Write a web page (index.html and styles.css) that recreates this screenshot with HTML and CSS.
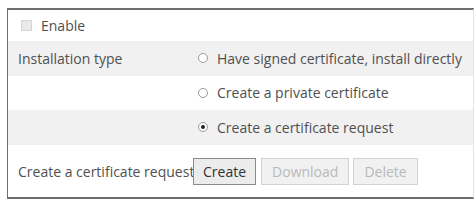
FILE: index.html
```html
<!DOCTYPE html>
<html lang="en">
<head>
    <meta charset="UTF-8">
    <title>Certificate</title>
    <link rel="stylesheet" href="styles.css">
</head>
<body>
    <div class="panel">
        <div class="row row-enable">
            <span class="check"></span>
            <span>Enable</span>
        </div>
        <div class="row shaded">
            <span class="label">Installation type</span>
            <span class="radio"></span>
            <span>Have signed certificate, install directly</span>
        </div>
        <div class="row">
            <span class="label"></span>
            <span class="radio"></span>
            <span>Create a private certificate</span>
        </div>
        <div class="row shaded">
            <span class="label"></span>
            <span class="radio checked"></span>
            <span>Create a certificate request</span>
        </div>
        <div class="row row-actions">
            <span class="label">Create a certificate request</span>
            <button class="btn btn-create">Create</button>
            <button class="btn" disabled>Download</button>
            <button class="btn" disabled>Delete</button>
        </div>
    </div>
</body>
</html>
```

FILE: styles.css
```css
* {
    margin: 0;
    padding: 0;
    box-sizing: border-box;
}

body {
    font-family: 'Open Sans', 'Noto Sans', sans-serif;
    font-size: 14px;
    color: #505050;
    background: #fff;
}

.panel {
    margin: 8px 0 0 7px;
    width: 467px;
    height: 191px;
    border-top: 2px solid #6e6e6e;
    border-left: 1px solid #6e6e6e;
    border-bottom: 2px solid #6e6e6e;
    border-right: 1px solid #e4e4e4;
    overflow: hidden;
}

.row {
    display: flex;
    align-items: center;
    height: 34.5px;
    white-space: nowrap;
}

.row.shaded {
    background: #f1f1f1;
}

.row-enable {
    height: 31px;
    padding-left: 13px;
}

.row-actions {
    height: 54px;
}

.label {
    width: 186px;
    flex: none;
    padding-left: 10px;
}

.row-actions .label {
    width: 185px;
}

.check {
    width: 11px;
    height: 11px;
    background: #e9e9e9;
    border: 1px solid #d4d4d4;
    margin-right: 9px;
}

.radio {
    width: 10px;
    height: 10px;
    flex: none;
    border: 1px solid #9a9a9a;
    border-radius: 50%;
    margin: 0 9px 0 4px;
    position: relative;
    background: #fff;
}

.radio.checked::after {
    content: '';
    position: absolute;
    left: 2px;
    top: 2px;
    width: 4px;
    height: 4px;
    border-radius: 50%;
    background: #222;
}

.btn {
    font-family: inherit;
    font-size: 14px;
    color: #333;
    background: #ececec;
    border: 1px solid #8a8a8a;
    height: 27px;
    padding: 0 10px;
    margin-right: 4px;
    position: relative;
}

.btn-create {
    padding: 0 9px;
    margin-right: 5px;
}

.btn:disabled {
    color: #b9b9b9;
    background: #f1f1f1;
    border-color: #d2d2d2;
}
```
